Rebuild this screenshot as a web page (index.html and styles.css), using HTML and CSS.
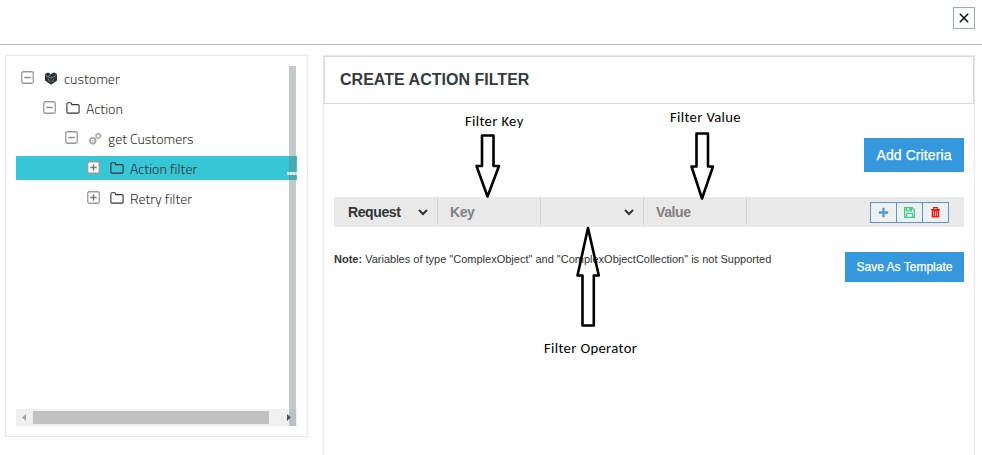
FILE: index.html
```
<!DOCTYPE html>
<html lang="en">
<head>
<meta charset="utf-8">
<title>Create Action Filter</title>
<link rel="stylesheet" href="styles.css">
</head>
<body>
<svg class="defs" width="0" height="0" aria-hidden="true">
  <symbol id="minus" viewBox="0 0 13 13"><rect x=".75" y=".75" width="11.5" height="11.5" rx="1.5" fill="#fff" stroke="#999" stroke-width="1.3"/><path d="M3.3 6.5h6.4" stroke="#888" stroke-width="1.4"/></symbol>
  <symbol id="plus" viewBox="0 0 13 13"><rect x=".75" y=".75" width="11.5" height="11.5" rx="1.5" fill="#fff" stroke="#999" stroke-width="1.3"/><path d="M3.3 6.5h6.4M6.5 3.3v6.4" stroke="#777" stroke-width="1.4"/></symbol>
  <symbol id="folder" viewBox="0 0 14 12"><path d="M.9 10V1.900Q.9.800 2 .800h2.700q1 0 1 1v.800h6.300q1.100 0 1.100 1.100V10q0 1.100-1.100 1.100H2Q.9 11.100.9 10z" fill="none" stroke="#333" stroke-width="1.100"/></symbol>
</svg>
<header class="topbar"><button class="close" aria-label="Close"><svg width="10" height="10" viewBox="0 0 10 10"><path d="M.8 .8l8.400 8.400M9.200 .8L.8 9.200" stroke="#111" stroke-width="1.500"/></svg></button></header>
<main class="content">
  <aside class="sidebar">
    <div class="tree">
      <div class="node level0"><svg class="toggle"><use href="#minus"/></svg>
        <svg class="icon root" viewBox="0 0 14 13" preserveAspectRatio="none"><path d="M1 2l3-1.500L7 2l3-1.500L13 2v6.500L7 12.700 1 8.500z" fill="#263238"/><path d="M1.500 3.300L7 6.200l5.500-2.900M7 2.300L4.300 4.300M4 6.700l2.300 3.500M10 6.700L7.700 10" fill="none" stroke="#aab4b7" stroke-width=".7"/></svg><span class="name">customer</span></div>
      <div class="node level1"><svg class="toggle"><use href="#minus"/></svg><svg class="icon"><use href="#folder"/></svg><span class="name">Action</span></div>
      <div class="node level2"><svg class="toggle"><use href="#minus"/></svg>
        <svg class="icon gears" viewBox="0 0 14 13"><g fill="none" stroke="#a5a5a5"><circle cx="4.700" cy="8.700" r="2.700" stroke-width="1.700"/><circle cx="4.700" cy="8.700" r="3.700" stroke-width=".8" stroke-dasharray="1.300 1.200"/><circle cx="10.200" cy="4" r="2.200" stroke-width="1.200"/><circle cx="10.200" cy="4" r="3" stroke-width=".7" stroke-dasharray="1.100 1"/></g><circle cx="4.700" cy="8.700" r=".8" fill="#aaa"/><circle cx="10.200" cy="4" r=".6" fill="#aaa"/></svg><span class="name">get Customers</span></div>
      <div class="node level3 selected"><svg class="toggle"><use href="#plus"/></svg><svg class="icon"><use href="#folder"/></svg><span class="name">Action filter</span></div>
      <div class="node level3"><svg class="toggle"><use href="#plus"/></svg><svg class="icon"><use href="#folder"/></svg><span class="name">Retry filter</span></div>
    </div>
    <div class="hscroll"><svg width="17" height="17"><path d="M10 5v7L6 8.500z" fill="#a3a3a3"/></svg><span class="thumb"></span><svg class="right" width="17" height="17"><path d="M7 5v7l4-3.500z" fill="#505050"/></svg></div>
    <div class="resizer"></div>
    <div class="grip"></div>
  </aside>
  <section class="panel">
    <h1 class="title"><span>CREATE ACTION FILTER</span></h1>
    <div class="body">
      <div class="actions"><button class="primary"><span class="add-text">Add Criteria</span></button></div>
      <div class="criteria">
        <div class="cell select"><span>Request</span><svg width="10" height="7"><path d="M1 1l4 4 4-4" fill="none" stroke="#333" stroke-width="2"/></svg></div>
        <div class="cell hint">Key</div>
        <div class="cell select"><span></span><svg width="10" height="7"><path d="M1 1l4 4 4-4" fill="none" stroke="#333" stroke-width="2"/></svg></div>
        <div class="cell hint">Value</div>
        <div class="tools">
          <button aria-label="Add"><svg width="11" height="11"><path d="M5.500 .800v9.400M.800 5.500h9.400" stroke="#5598d4" stroke-width="2.300"/></svg></button>
          <button aria-label="Save"><svg width="11" height="11"><path d="M.600 .600h7.400l2.400 2.400v7.400H.600z" fill="none" stroke="#38cb89" stroke-width="1.200"/><path d="M2.500 .500h5v3.300h-5zM2.500 10V6.500h6V10" fill="none" stroke="#38cb89" stroke-width="1.200"/><path d="M5.300 1h1.500v2H5.300z" fill="#38cb89"/></svg></button>
          <button aria-label="Delete"><svg width="11" height="11"><path d="M1 2.500h9M3.500 2.200V.700h4v1.500" fill="none" stroke="#e02020" stroke-width="1.200"/><path d="M1.700 3h7.600v7.500H1.700z" fill="#e02020"/><path d="M3.700 4v5M5.500 4v5M7.300 4v5" stroke="#f1bcbc" stroke-width=".8"/></svg></button>
        </div>
      </div>
      <div class="footer">
        <p class="note"><b>Note:</b> Variables of type "ComplexObject" and "ComplexObjectCollection" is not Supported</p>
        <button class="primary save"><span class="save-text">Save As Template</span></button>
      </div>
    </div>
  </section>
</main>
<div class="callout key">Filter Key</div>
<div class="callout value">Filter Value</div>
<div class="callout operator">Filter Operator</div>
<svg class="arrows" width="982" height="455"><g fill="none" stroke="#000" stroke-width="2.600" stroke-linejoin="round">
  <path d="M482 135.500h11.500V166h5.500L487.500 196.500 476.500 166h5.500z"/>
  <path d="M696.500 133.500H708V166.500h5L702 198.500 691.500 166.500h5z"/>
  <path d="M588 228l10.800 47.500h-5V325.500H582.500V275.500h-5z"/>
</g></svg>
</body>
</html>
```
FILE: styles.css
```
* { box-sizing: border-box; }
body { margin: 0; height: 455px; overflow: hidden; position: relative; background: #fff; color: #333; font-family: "Liberation Sans", sans-serif; }
button { font: inherit; margin: 0; padding: 0; }
svg { display: block; flex: none; }
.defs { position: absolute; }
.topbar { height: 45px; border-bottom: 1px solid #bdbdbd; padding: 7px 7px 0 0; display: flex; justify-content: flex-end; }
.close { width: 22px; height: 22px; border: 1px solid #9aabb8; background: #fff; display: flex; align-items: center; justify-content: center; }
.content { display: flex; align-items: flex-start; gap: 15px; padding: 10px 7px 0 5px; }
.sidebar { position: relative; width: 303px; height: 382px; border: 1px solid #e6e8ea; padding: 10px; display: flex; flex-direction: column; }
.tree { width: 281px; flex: 1; display: flex; flex-direction: column; gap: 6px; }
.node { height: 24px; display: flex; align-items: center; font-family: "Titillium Web", "Open Sans", sans-serif; font-size: 14px; font-weight: 300; color: #333; white-space: nowrap; }
.level0 { padding-left: 5px; }
.level1 { padding-left: 27px; }
.level2 { padding-left: 49px; }
.level3 { padding-left: 71px; }
.toggle { width: 13px; height: 13px; margin-bottom: 1px; }
.icon { width: 14px; height: 12px; margin: 0 6px 1px 10px; }
.root { height: 13px; margin-bottom: 0; }
.gears { height: 13px; margin-bottom: 0; }
.name { line-height: 24px; padding-top: 2px; }
.selected { background: #36c6d5; }
.hscroll { width: 281px; height: 17px; background: #f0f0f0; display: flex; align-items: center; }
.thumb { width: 236px; height: 13px; background: #c1c1c1; }
.right { margin-left: auto; }
.resizer { position: absolute; left: 283px; top: 10px; width: 7px; height: 360px; background: rgba(96, 125, 130, .4); }
.grip { position: absolute; left: 281px; top: 116px; width: 10px; height: 3px; background: repeating-linear-gradient(90deg, #e9edee 0 2px, #c5d3d6 2px 3px); }
.panel { width: 652px; height: 420px; border: 1px solid #e6e8ea; }
.title { margin: 0; height: 48px; border: 1px solid #d9dadb; padding-left: 15px; display: flex; align-items: center; font-size: 16px; font-weight: bold; color: #343a40; }
.title span { white-space: nowrap; letter-spacing: .02px; }
.body { padding: 34px 10px 0 10px; }
.actions { display: flex; justify-content: flex-end; }
.primary { width: 100px; height: 34px; border: 0; background: #3598dc; color: #fff; font-size: 14px; -webkit-text-stroke: .25px #fff; white-space: nowrap; }
.add-text { letter-spacing: .1px; }
.criteria { margin-top: 25px; width: 630px; height: 30px; background: #e9e9e9; display: flex; align-items: flex-start; font-size: 14px; letter-spacing: -.4px; font-weight: bold; }
.cell { width: 103px; height: 28px; border-right: 1px solid #d3d3d3; padding: 2px 9px 0 12px; display: flex; align-items: center; }
.cell:first-child { width: 104px; padding-left: 14px; }
.select { justify-content: space-between; }
.hint { color: #808080; }
.tools { margin: 5px 15px 0 auto; display: flex; border: 1px solid #5598d4; height: 21px; }
.tools button { width: 26px; border: 0; border-right: 1px solid #5598d4; background: #efefef; display: flex; align-items: center; justify-content: center; }
.tools button:last-child { width: 25px; border: 0; }
.footer { margin-top: 25px; display: flex; justify-content: space-between; align-items: flex-start; }
.note { margin: 0; font-size: 11px; line-height: 14px; white-space: nowrap; color: #333; }
.save { width: 119px; height: 30px; font-size: 12px; }
.callout { position: absolute; font-family: Carlito, Lato, sans-serif; font-size: 14.67px; line-height: 18px; color: #000; white-space: nowrap; letter-spacing: .35px; }
.key { left: 465px; top: 112px; }
.value { left: 670px; top: 108px; }
.operator { left: 544px; top: 339px; }
.arrows { position: absolute; left: 0; top: 0; pointer-events: none; }
```
